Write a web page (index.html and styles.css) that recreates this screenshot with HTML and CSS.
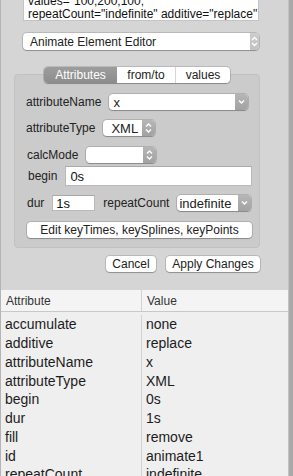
FILE: index.html
```html
<!DOCTYPE html>
<html lang="en">
<head>
  <meta charset="UTF-8">
  <meta name="viewport" content="width=device-width, initial-scale=1.0">
  <title>Animate Element Editor</title>
  <link rel="stylesheet" href="styles.css">
</head>
<body>
  <div class="window">
    <div class="main">
      <div class="editor-panel">
        <div class="source">values="100;200;100;"<br>repeatCount="indefinite" additive="replace"</div>

        <div class="control popup editor-select">
          <span class="popup-text">Animate Element Editor</span>
          <span class="arrow light">
            <svg width="9" height="17" viewBox="0 0 9 17"><polyline points="2,7 4.5,4.5 7,7" /><polyline points="2,10 4.5,12.5 7,10" /></svg>
          </span>
        </div>

        <div class="group">
          <div class="segments">
            <span class="seg active seg-attr">Attributes</span><span class="seg seg-from">from/to</span><span class="seg seg-values">values</span>
          </div>

          <div class="row row-name">
            <span class="label">attributeName</span>
            <div class="control popup name-select">
              <span class="popup-text">x</span>
              <span class="arrow">
                <svg width="13" height="16" viewBox="0 0 13 16"><polyline points="4,6.5 6.5,9 9,6.5" /></svg>
              </span>
            </div>
          </div>

          <div class="row row-type">
            <span class="label">attributeType</span>
            <div class="control popup type-select">
              <span class="popup-text">XML</span>
              <span class="arrow">
                <svg width="13" height="16" viewBox="0 0 13 16"><polyline points="4,6.5 6.5,4 9,6.5" /><polyline points="4,9.5 6.5,12 9,9.5" /></svg>
              </span>
            </div>
          </div>

          <div class="row row-calc">
            <span class="label">calcMode</span>
            <div class="control popup calc-select">
              <span class="popup-text"></span>
              <span class="arrow">
                <svg width="13" height="16" viewBox="0 0 13 16"><polyline points="4,6.5 6.5,4 9,6.5" /><polyline points="4,9.5 6.5,12 9,9.5" /></svg>
              </span>
            </div>
          </div>

          <div class="row row-begin">
            <span class="label">begin</span>
            <div class="field begin-field">0s</div>
          </div>

          <div class="row row-dur">
            <span class="label">dur</span>
            <div class="field dur-field">1s</div>
            <span class="label">repeatCount</span>
            <div class="control popup repeat-select">
              <span class="popup-text">indefinite</span>
              <span class="arrow">
                <svg width="13" height="16" viewBox="0 0 13 16"><polyline points="4,6.5 6.5,9 9,6.5" /></svg>
              </span>
            </div>
          </div>

          <div class="row row-keys">
            <button class="control push keys-button">Edit keyTimes, keySplines, keyPoints</button>
          </div>
        </div>

        <div class="actions">
          <button class="control push cancel">Cancel</button>
          <button class="control push apply">Apply Changes</button>
        </div>
      </div>

      <div class="table">
        <div class="thead">
          <span class="th th-name">Attribute</span>
          <span class="th th-value">Value</span>
        </div>
        <div class="tbody">
          <div class="tr"><span class="td td-name">accumulate</span><span class="td td-value">none</span></div>
          <div class="tr"><span class="td td-name">additive</span><span class="td td-value">replace</span></div>
          <div class="tr"><span class="td td-name">attributeName</span><span class="td td-value">x</span></div>
          <div class="tr"><span class="td td-name">attributeType</span><span class="td td-value">XML</span></div>
          <div class="tr"><span class="td td-name">begin</span><span class="td td-value">0s</span></div>
          <div class="tr"><span class="td td-name">dur</span><span class="td td-value">1s</span></div>
          <div class="tr"><span class="td td-name">fill</span><span class="td td-value">remove</span></div>
          <div class="tr"><span class="td td-name">id</span><span class="td td-value">animate1</span></div>
          <div class="tr"><span class="td td-name">repeatCount</span><span class="td td-value">indefinite</span></div>
        </div>
      </div>
    </div>
    <div class="edge"></div>
  </div>
</body>
</html>
```

FILE: styles.css
```css
body {
  margin: 0;
  font-family: "Liberation Sans", Arial, Helvetica, sans-serif;
  font-size: 12px;
  color: #222;
  background-color: #d5d5d5;
}
.window {
  display: flex;
  width: 293px;
  height: 476px;
  overflow: hidden;
}
.main {
  width: 287px;
  border-left: 1px solid #b4b4b4;
  display: flex;
  flex-direction: column;
}
.edge {
  width: 4px;
  border-left: 1px solid #c2c2c2;
  background-color: #a9a9a9;
}
.editor-panel {
  height: 290px;
  flex: none;
  display: flex;
  flex-direction: column;
  align-items: flex-start;
}
.source {
  margin: -6px 0 0 22px;
  width: 236px;
  height: 27px;
  box-sizing: border-box;
  padding: 1px 0 0 4px;
  background: #fff;
  border: 1px solid #c4c4c4;
  border-top: none;
  line-height: 13px;
  white-space: nowrap;
  overflow: hidden;
  color: #111;
}

/* mac style controls */
.control {
  background: #fff;
  border: none;
  border-radius: 4px;
  box-shadow: 0 0 0 1px rgba(0, 0, 0, 0.13), 0 1px 1px rgba(0, 0, 0, 0.22);
  font-family: inherit;
  font-size: 12px;
  color: #222;
  padding: 0;
}
.popup {
  display: flex;
  align-items: center;
  height: 16px;
  box-sizing: border-box;
  overflow: hidden;
}
.popup-text {
  flex: 1;
  white-space: nowrap;
}
.arrow {
  width: 13px;
  height: 100%;
  display: flex;
  align-items: center;
  justify-content: center;
  background: linear-gradient(#b6b6b6, #a2a2a2);
}
.arrow svg polyline {
  fill: none;
  stroke: #fff;
  stroke-width: 1.3;
}
.arrow.light {
  width: 9px;
  background: linear-gradient(#cdcdcd, #c2c2c2);
}
.editor-select {
  margin: 12px 0 0 22px;
  width: 236px;
  height: 17px;
}
.editor-select .popup-text {
  padding-left: 7px;
}

.group {
  margin: 24px 0 0 13px;
  width: 246px;
  box-sizing: border-box;
  border: 1px solid #c1c1c1;
  border-radius: 4px;
  background: #cbcbcb;
  padding-bottom: 9px;
  display: flex;
  flex-direction: column;
}
.segments {
  display: flex;
  align-self: center;
  margin-top: -8px;
  height: 16px;
  background: #fff;
  border-radius: 4px;
  box-shadow: 0 0 0 1px rgba(0, 0, 0, 0.13), 0 1px 1px rgba(0, 0, 0, 0.22);
  overflow: hidden;
}
.seg {
  display: flex;
  align-items: center;
  justify-content: center;
  height: 16px;
  color: #222;
}
.seg.active {
  background: linear-gradient(#9d9d9d, #8c8c8c);
  color: #fff;
}
.seg-attr { width: 73px; }
.seg-from { width: 58px; border-right: 1px solid #d6d6d6; }
.seg-values { width: 54px; }

.row {
  display: flex;
  align-items: center;
  gap: 8px;
  padding-left: 11px;
  height: 16px;
}
.label {
  color: #222;
  white-space: nowrap;
}
.row-name { margin-top: 11px; }
.row-type { margin-top: 10px; }
.row-calc { margin-top: 11px; padding-left: 12px; }
.row-begin { margin-top: 3px; height: 20px; padding-left: 13px; }
.row-dur { margin-top: 9px; padding-left: 12px; }
.row-keys { margin-top: 11px; padding-left: 12px; }

.name-select { width: 139px; }
.name-select .popup-text { padding-left: 4px; font-size: 13px; }
.type-select { width: 52px; }
.type-select .popup-text { padding-left: 8px; font-size: 13px; }
.calc-select { width: 70px; }
.repeat-select { width: 74px; margin-left: 0; }
.repeat-select .popup-text { padding-left: 2px; font-size: 13px; }

.field {
  background: #fff;
  border: 1px solid #b9b9b9;
  border-top-color: #a9a9a9;
  box-sizing: border-box;
  display: flex;
  align-items: center;
  color: #111;
  font-size: 13px;
}
.begin-field {
  width: 187px;
  height: 20px;
  padding-left: 4px;
}
.dur-field {
  width: 43px;
  height: 16px;
  padding-left: 3px;
}

.push {
  height: 16px;
  text-align: center;
  cursor: pointer;
}
.keys-button { width: 225px; }

.actions {
  display: flex;
  justify-content: flex-end;
  gap: 10px;
  width: 259px;
  margin-top: 8px;
}
.cancel { width: 50px; }
.apply { width: 94px; }

.table {
  flex: 1;
  display: flex;
  flex-direction: column;
  background: #efefef;
}
.thead {
  display: flex;
  height: 21px;
  background: #f4f4f4;
  border-bottom: 1px solid #c8c8c8;
  flex: none;
}
.th {
  display: flex;
  align-items: center;
  color: #333;
}
.th-name {
  width: 141px;
  box-sizing: border-box;
  padding-left: 5px;
  border-right: 1px solid #d2d2d2;
}
.th-value {
  padding-left: 5px;
}
.tr {
  display: flex;
  height: 18.75px;
  font-size: 14px;
  color: #1c1c1c;
}
.tr:first-child {
  padding-top: 3px;
}
.td {
  display: flex;
  align-items: center;
}
.td-name {
  width: 141px;
  box-sizing: border-box;
  padding-left: 4px;
  border-right: 1px solid #d2d2d2;
}
.td-value {
  padding-left: 4px;
}
```
